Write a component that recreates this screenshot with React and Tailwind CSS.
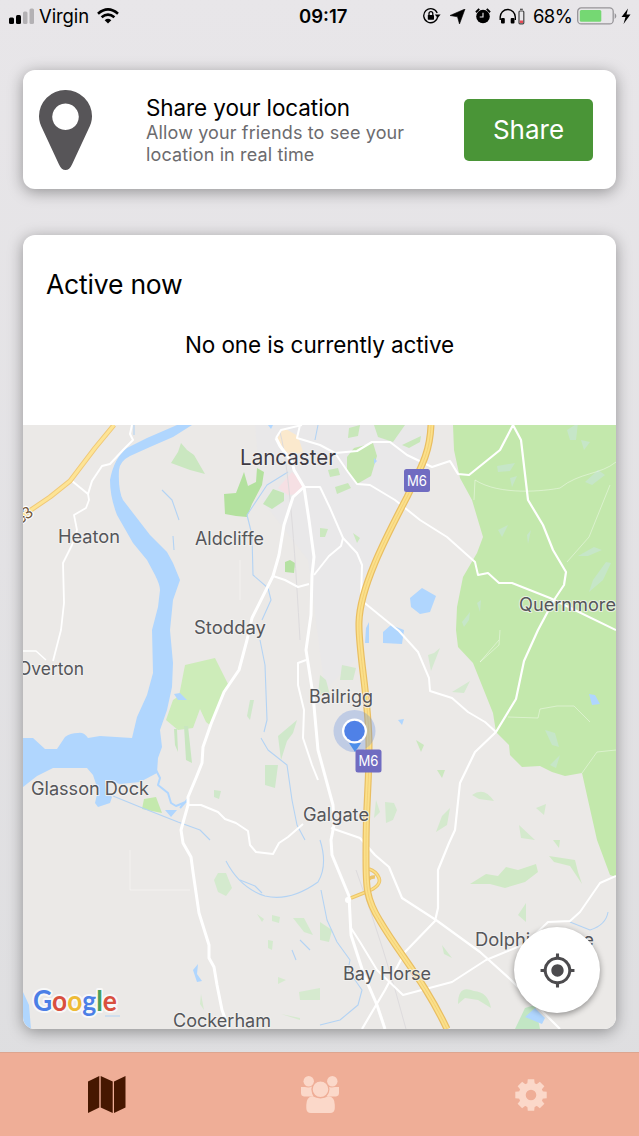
import React from "react";
import { MdGpsFixed } from "react-icons/md";

const WATER = "#b0d6fe";
const WOOD = "#c3e8ac";

// Roads drawn as plain white lines, [path, width]
const roads = [
  ["M132 425 L130 434 L133 440 L124 449 L110 464 L102 466 L92 481 L88 494 L72 481", 2],
  ["M88 494 L89 500 L86 508 L74 515 L77 530 L72 545 L63 563 L64 603 L61 630 L53 661", 1.8],
  ["M23 651 H36 L46 660", 1.5],
  ["M276 438 L281 430 L302 425 M300 425 L297 438 L320 445 L335 453", 2],
  ["M276 438 L280 446 L292 462 L294 470 L304 487 L293 497 L284 525 L279 555 L273 576 L252 618 L247 640 L239 670 L224 692 L211 724 L203 747 L202 763 L196 778 L188 797 L188 805 L181 830 L183 843 L191 857 L193 872 L199 913 L209 945 L209 958 L214 967 L217 985 L222 1010 L229 1029", 3],
  ["M304 487 L309 520 L314 557 L312 575 L311 615 L306 650 L313 695 L318 750 L333 805 L334 825 L331 840 L332 855 L349 896 L351 935 L364 975 L377 1005 L385 1029", 3],
  ["M304 487 H320 L330 508 L343 538 L341 546 L329 556 L314 575", 2],
  ["M343 538 L357 553 L362 565 L361 600 L399 631 L418 652 L429 678 L430 691 L452 698 L468 712 L485 722 L496 732", 2],
  ["M335 453 L357 451 L372 442 L390 442 L407 455 L432 467 L450 461 L458 474 L469 475 L500 450 L513 425 L521 440 L528 500 L543 525 L553 550 L566 572 L564 585 L554 600 L538 630 L524 661 L516 699 L496 732 L475 752 L460 783 L455 830 L449 843 L438 870 L438 908 L435 921 L405 952 L385 990 L362 1029", 2.2],
  ["M335 453 L348 472 L357 484 L370 485 L395 500 L420 520 L447 537 L475 562 L478 575 L488 573 L499 583 L512 583 L550 598 L616 630", 2],
  ["M273 576 L285 580 L298 587 L309 584", 2],
  ["M306 660 L298 663 L298 685 L304 710 L303 738 L312 765 L318 780", 2],
  ["M188 805 L201 805 L218 812 L225 819 L236 823 L248 831 L250 845 L256 852 L273 854 L279 843 L288 837 L303 824", 2],
  ["M331 828 L360 838 L375 855 L389 867 L402 898 L436 920 L480 952 L511 980 L560 1029", 2.2],
  ["M351 928 L360 942 L377 970 L403 995 L452 982 L486 960 L525 944 L548 922 L570 921 L580 912 L600 883 L616 876", 2],
];

const faintRoads = [
  "M475 480 L474 500 M475 480 C500 496 545 491 560 488 C580 472 600 475 616 462",
  "M610 485 L589 537 L567 562 M499 640 L480 662 L499 645 L500 630",
  "M508 717 L538 718 L540 709 L557 706 L574 706 L590 722 M582 773 L597 752 L616 750",
  "M130 850 V890 H190 M240 560 V600",
];

const streams = [
  "M288 472 L267 485 L247 515 L252 535 L253 575 L268 588 L271 600 L262 620 M260 640 L265 665 L267 720 L264 732",
  "M162 490 L172 500 L179 520 M173 536 L174 550 M134 425 V435 M318 425 L315 440",
  "M261 738 L268 750 L287 765 L292 800 L297 825 L305 840",
  "M113 796 L140 807 L178 822 L200 830 L210 840 M226 861 Q240 888 265 896 Q290 902 318 882 Q328 865 320 840",
  "M321 890 L327 920 L337 942 L350 960 L348 970 L362 990 L358 1005 L340 1020 L320 1025",
  "M240 880 L255 886 L262 893 M300 940 L310 950 M292 950 L296 960 M105 1016 H120",
  "M570 922 L590 930 Q606 925 608 912",
];

const parks = [
  ["M224 494 L236 493 L241 480 L244 472 L248 486 L256 482 L257 468 L264 472 L262 485 L252 504 L247 517 L236 516 L225 514z", "#b3e19e"],
  ["M171 463 L178 452 L181 443 L187 450 L194 455 L205 474 L190 470z", "#cae7c0"],
  ["M263 504 L273 489 L284 493 V501 L272 509z", "#c4e6b8"],
  ["M185 665 L215 658 L228 684 L211 726 L206 722 L200 709 L193 728 L178 730 L166 720 L173 700 L179 696z", "#cdecb9"],
  ["M174 729 L175 745 L178 752 L177 729z M184 726 L186 760 L192 763 L188 726z", "#c8e6c0"],
  ["M144 799 L156 797 L162 813 L142 809z", "#c4e9ad"],
  ["M285 562 L290 560 L295 563 L294 573 L285 572z", "#b5e1a2"],
  ["M347 457 L354 448 L373 443 L377 456 L371 476 L357 484 L347 470z", "#c5e6b1"],
  ["M349 428 L360 425 L358 436 L348 438z M374 425 L405 425 L393 442 L378 437z M402 445 L421 436 L420 442 L409 448z M335 487 L348 483 L351 488 L337 494z M328 470 L338 468 L340 475 L330 477z", "#c8e7ba"],
  ["M278 736 L297 720 L293 733 L287 741 L281 760z M265 765 L278 765 L275 788 L265 785z M250 700 L254 700 L250 720 L247 716z M214 790 L221 791 L219 799 L214 797z", "#cfe8ca"],
  ["M214 880 L218 873 L226 873 L232 888 L226 896 L218 892z M272 915 L280 917 L279 923 L272 921z M293 918 L304 918 L313 935 L304 932z M257 914 L264 919 L262 922z M268 940 L273 941 L272 950 L268 948z", "#d4eace"],
  ["M299 992 L320 988 V1000 H300z M278 977 L286 980 L278 984z M281 1014 L300 1018 V1020z M201 994 L204 1010 L200 1004z", "#d6eacf"],
  ["M320 675 L326 680 L330 695 H318z M342 665 L356 668 L353 680 L340 680z", "#d3e8cd"],
  ["M431 671 L440 648 L434 653 L428 655z M452 692 L470 681 L464 693z M385 802 L394 803 L397 810 L393 820 L386 823z M376 800 L380 812 L374 818z", "#d5e9d0"],
  ["M472 795 Q484 786 494 801 L479 799z M536 808 L546 804 L544 815z M519 825 L535 840 L521 838z M442 816 L450 808 L447 825 L436 832z", "#d4e9cd"],
  ["M470 884 L486 874 L498 876 L506 867 L518 870 L536 864 L538 872 L525 882 L505 888 L490 884z M549 856 L575 860 L578 872 L582 884 L570 866 L554 862z M553 840 L560 840 L559 848z", "#d0e9c6"],
  ["M458 1004 Q458 984 474 991 Q488 992 491 1008 L478 1000 L465 998z M518 915 L526 903 L526 922z M442 945 L452 958 L444 954z M320 922 L332 930 L329 942 L320 940z", "#d2e9cc"],
  ["M515 1029 L525 1008 L535 1005 L540 1029z", "#c2e6c4"],
  ["M416 740 L424 745 L421 752z M437 770 L445 770 L442 778z M353 533 L360 538 L357 543z M320 528 L328 529 L325 537 H320z", "#cbe8bf"],
];

// Bare patches inside the big forest
const clearings =
  "M567 430 L578 423 L576 440 L570 440z M581 440 L590 442 L584 450z M497 466 L515 463 L510 471 L498 472z M510 478 L517 476 L512 487z M585 482 L598 470 L605 475 L592 485z M498 530 L508 525 L502 537z M527 535 L531 530 L528 544z M578 556 L594 547 L602 550 L588 556z M593 580 L606 562 L611 563 L603 580 L589 592z M545 730 L555 733 L559 747 L552 745z M550 765 L560 755 L556 768z M462 622 L470 612 L469 620 L464 627z M477 603 L481 600 L480 612z";

const labels = [
  { text: "Lancaster", x: 240, y: 465, width: 96, size: 22, fill: "#3f3b44" },
  { text: "Heaton", x: 58, y: 543, width: 62 },
  { text: "Aldcliffe", x: 195, y: 545, width: 69 },
  { text: "Stodday", x: 194, y: 634, width: 72 },
  { text: "Quernmore", x: 519, y: 611, width: 97 },
  { text: "Overton", x: 18, y: 675, width: 66 },
  { text: "Bailrigg", x: 309, y: 703, width: 64 },
  { text: "Glasson Dock", x: 31, y: 795, width: 118 },
  { text: "Galgate", x: 303, y: 821, width: 66 },
  { text: "Dolphinholme", x: 475, y: 946, width: 119 },
  { text: "Bay Horse", x: 343, y: 980, width: 88 },
  { text: "Cockerham", x: 173, y: 1027, width: 98 },
];

const googleLetters = [
  ["G", "#4c7fe6"],
  ["o", "#d9503f"],
  ["o", "#eebb35"],
  ["g", "#4c7fe6"],
  ["l", "#46a05a"],
  ["e", "#d9503f"],
];

const M6_PATH =
  "M431 425 C430 450 424 462 407 497 C390 530 360 585 359 622 C358 650 369 700 369 745 C369 790 366 800 366 850 C366 885 365 897 380 921 C400 955 425 982 447 1029";

const MotorwayBadge = ({ x, y }) => (
  <g>
    <rect x={x} y={y} width="26" height="23" rx="2.5" fill="#706cc1" />
    <text x={x + 13} y={y + 16.5} textAnchor="middle" fontSize="14" textLength="20" lengthAdjust="spacingAndGlyphs" fill="#fff">
      M6
    </text>
  </g>
);

const Map = () => (
  <svg viewBox="23 425 593 604" className="block h-[604px] w-full font-[Inter,sans-serif]" fill="none" strokeLinejoin="round">
    <rect x="23" y="425" width="593" height="604" fill="#ebe9e7" />
    <path d="M255 425 H430 L415 475 L370 570 L355 660 L325 690 L308 560 L262 500z" fill="#e9e8e9" />

    {/* woods and parks */}
    <path
      d="M453 425 L454 450 L460 478 L472 500 L483 537 L477 553 L463 577 L457 607 L456 630 L458 647 L473 663 L485 693 L493 713 L496 732 L509 745 L510 755 L522 767 L540 766 L552 772 L565 776 L582 773 L588 800 L597 840 L610 875 L616 877 V425z"
      fill={WOOD}
    />
    <path d={clearings} fill="#c6e6c8" />
    {parks.map(([d, fill]) => (
      <path key={d} d={d} fill={fill} />
    ))}
    <path d="M276 440 L284 428 L298 436 L303 452 L290 456z" fill="#fbe9cd" />
    <path d="M278 488 L292 472 L303 483 L299 494 L288 495z" fill="#f6e0e4" />

    {/* water */}
    <path
      d="M177 425 L147 438 L127 448 Q114 458 110 480 Q110 497 117 515 L133 543 L147 560 L155 575 Q160 585 160 590 L158 607 L152 630 L153 673 L147 695 L137 717 L132 738 L100 736 L88 738 Q84 732 78 733 Q70 733 65 737 L57 749 L45 749 L33 738 H23 V787 L37 776 L53 768 L87 768 L93 775 L98 790 L95 803 L98 807 L110 803 L112 797 L106 790 L105 780 L120 784 L140 782 L157 773 L158 758 L162 747 L160 730 L167 710 L172 687 L173 663 L170 630 L173 600 L180 580 L173 563 L167 552 L150 535 L133 513 L123 500 Q118 490 119 470 Q120 461 130 456 L150 447 L173 437 L192 425z"
      fill={WATER}
    />
    <path d="M156 770 L160 778 L158 785 L168 793 L171 803 L176 806 L188 801 M180 808 L188 799" stroke={WATER} strokeWidth="2" />
    <path
      d="M410 598 L422 588 L436 596 L430 612 L420 614 L411 607z M383 632 L391 625 L404 630 L402 644 L383 643z M366 628 L369 622 L369 643 H365z M174 694 L180 693 L187 700 L178 700z M165 810 L177 810 L171 817z M23 992 L29 1005 L31 1029 H23z M193 970 L198 964 L197 974 L202 981 L197 982z M525 1017 L535 1008 L545 1018 L542 1024z M589 694 L595 695 L600 704 L592 705z M398 720 L404 719 L402 725z M374 458 L377 461 L374 464z M268 425 H273 L271 429z"
      fill={WATER}
    />
    {streams.map((d) => (
      <path key={d} d={d} stroke="#b3d3f4" strokeWidth="1.1" />
    ))}

    {/* roads */}
    <path d="M280 432 C290 470 296 570 300 640 M356 870 Q385 950 406 1029" stroke="#dddbdd" strokeWidth="1" />
    {faintRoads.map((d) => (
      <path key={d} d={d} stroke="#fff" strokeWidth="1" opacity=".4" />
    ))}
    {roads.map(([d, width]) => (
      <path key={d} d={d} stroke="#fff" strokeWidth={width} />
    ))}
    <path d="M114 425 L95 448 L70 481 L50 497 L22 516" stroke="#f0c877" strokeWidth="5" />
    <path d="M114 425 L95 448 L70 481 L50 497 L22 516" stroke="#fde495" strokeWidth="3" />
    <path d="M351 898 L366 892 Q382 886 379 878 Q376 871 369 869 M366 890 Q366 876 375 877" stroke="#ecc469" strokeWidth="3.6" />
    <path d="M351 898 L366 892 Q382 886 379 878 Q376 871 369 869" stroke="#fbdf86" strokeWidth="1.8" />
    <path d={M6_PATH} stroke="#e9be62" strokeWidth="7" />
    <path d={M6_PATH} stroke="#fbe08a" strokeWidth="4.6" />
    <path d={M6_PATH} stroke="#f1cd73" strokeWidth="0.8" />
    <circle cx="348" cy="900" r="3" fill="#fff" />

    {labels.map(({ text, x, y, width, size = 18, fill = "#55565a" }) => (
      <text
        key={text}
        x={x}
        y={y}
        textLength={width}
        lengthAdjust="spacingAndGlyphs"
        fontSize={size}
        fill={fill}
        stroke="#f3f2f1"
        strokeWidth="2"
        strokeOpacity=".8"
        paintOrder="stroke"
      >
        {text}
      </text>
    ))}
    <text transform="translate(20 525) rotate(-36)" fontSize="16" textLength="18" fill="#755a3c" stroke="#fff" strokeWidth="2" paintOrder="stroke">
      33
    </text>

    {/* own position */}
    <circle cx="354.500" cy="731" r="21" fill="#5480e0" opacity=".28" />
    <path d="M349 743 L355 752 L361 743z" fill="#4d8fea" />
    <circle cx="354.500" cy="731" r="12.500" fill="#fff" />
    <circle cx="354.500" cy="731" r="10.300" fill="#4f81e7" />
    <MotorwayBadge x={404} y={469} />
    <MotorwayBadge x={355.500} y={749.500} />

    <text
      className="font-[Lato,sans-serif]"
      x="33"
      y="1011"
      fontSize="29"
      fontWeight="700"
      textLength="84"
      lengthAdjust="spacingAndGlyphs"
      stroke="#f8f8f8"
      strokeWidth="4"
      paintOrder="stroke"
    >
      {googleLetters.map(([letter, fill], i) => (
        <tspan key={i} fill={fill}>
          {letter}
        </tspan>
      ))}
    </text>
  </svg>
);

const StatusBar = () => (
  <header className="grid h-8 grid-cols-[1fr_auto_1fr] items-center pr-2 pl-[9px] text-[18.500px] leading-8 text-black">
    <div className="flex items-center">
      <svg width="26" height="16" viewBox="0 0 26 16">
        <rect x="0" y="9.500" width="5" height="6.500" rx="1.500" />
        <rect x="7" y="7" width="5" height="9" rx="1.500" />
        <rect x="14" y="3.500" width="4.500" height="12.500" rx="1.500" fill="#b3b1b4" />
        <rect x="20.500" y="0.500" width="4.500" height="15.500" rx="1.500" fill="#b3b1b4" />
      </svg>
      <span className="ml-1 w-[50px] tracking-[-0.1px]">Virgin</span>
      <svg className="ml-2" width="22" height="16" viewBox="0 0 22 16" fill="none" stroke="#000" strokeWidth="2.700">
        <path d="M1 5.700 Q11 -2.800 21 5.700" />
        <path d="M4.600 9.300 Q11 4 17.400 9.300" />
        <path d="M11 15.500 L7.700 12.200 Q11 9.400 14.300 12.200z" fill="#000" stroke="none" />
      </svg>
    </div>
    <div className="w-[50px] pl-1 text-center font-semibold whitespace-nowrap">09:17</div>
    <div className="flex items-center justify-end">
      <svg width="18" height="16" viewBox="0 0 18 16" fill="none" stroke="#000" strokeWidth="1.300">
        <path d="M14.700 8.500 A7 7 0 1 1 14.200 5 M13 12 A7 7 0 0 1 10 14.500" />
        <path d="M11.800 6.500 h5.800 l-2.900 3.400z" fill="#000" stroke="none" />
        <rect x="4.800" y="7" width="6.200" height="4.700" rx=".6" fill="#000" stroke="none" />
        <path d="M6 7 V5.500 a1.900 1.900 0 0 1 3.800 0 V7" />
      </svg>
      <svg className="ml-[9px]" width="16" height="15" viewBox="0 0 16 15">
        <path d="M15 0 L9.500 15 L7.500 7.800 L0 6.500z" stroke="#000" strokeWidth=".6" />
      </svg>
      <svg className="ml-[9px]" width="16" height="16" viewBox="0 0 17 17">
        <circle cx="8.500" cy="9" r="7.200" />
        <path d="M1 4.500 L4.500 1 M16 4.500 L12.500 1" stroke="#000" strokeWidth="2" />
        <path d="M8.500 5 V9.500 H5" stroke="#e8e6e9" strokeWidth="1.200" fill="none" />
      </svg>
      <svg className="ml-2" width="26" height="17" viewBox="0 0 26 17" fill="none">
        <path d="M1.200 12 V9 A7.300 7.300 0 0 1 16.300 9 V12" stroke="#000" strokeWidth="1.400" />
        <rect x="2" y="10" width="3.800" height="5.500" rx="1" fill="#000" />
        <rect x="11.700" y="10" width="3.800" height="5.500" rx="1" fill="#000" />
        <rect x="20" y="3" width="4.800" height="12.800" rx="1" stroke="#444" strokeWidth="1.200" />
        <path d="M21 1.300 H23.800" stroke="#444" strokeWidth="1.200" />
        <rect x="20.800" y="12.500" width="3.200" height="2.500" fill="#e74a56" />
      </svg>
      <span className="ml-2 w-[39px] tracking-[-0.6px]">68%</span>
      <svg className="ml-[5px]" width="54" height="18" viewBox="0 0 54 18">
        <rect x=".7" y=".9" width="35.500" height="16" rx="3.500" fill="none" stroke="#969498" strokeWidth="1.300" />
        <rect x="2.800" y="3" width="21.500" height="11.800" rx="1.500" fill="#75d873" />
        <path d="M37.700 6 Q41 9 37.700 12z" fill="#969498" />
        <path d="M51 1.500 L44.500 10 H48.500 L46.500 17 L53.500 7.500 H49.500z" />
      </svg>
    </div>
  </header>
);

const ShareCard = () => (
  <section className="flex h-[119px] items-center rounded-xl bg-white pr-[23px] pl-4 shadow-[0_3px_15px_rgba(0,0,0,0.36)]">
    <svg width="53" height="80" viewBox="0 0 53 80" fill="#575558">
      <path
        fillRule="evenodd"
        d="M26.500 0 A26.300 26.300 0 0 1 53 26.500 C53 31 51.500 35 49.500 39 L33 74.500 Q30.500 80 26.500 80 Q22.500 80 20 74.500 L3.500 39 C1.500 35 0 31 0 26.500 A26.300 26.300 0 0 1 26.500 0z M26.500 13.500 a13.300 13.300 0 1 0 0.010 0z"
      />
    </svg>
    <div className="ml-[54px] flex-1">
      <h2 className="text-[22.500px] leading-7 tracking-[-0.1px] whitespace-nowrap text-black">Share your location</h2>
      <p className="text-[18px] leading-[22px] tracking-[0.130px] whitespace-nowrap text-[#6c6b6e]">
        Allow your friends to see your
        <br />
        location in real time
      </p>
    </div>
    <button className="h-[62px] w-[129px] rounded-[5px] bg-[#4a9537] text-[26px] text-white">Share</button>
  </section>
);

const TabBar = () => (
  <nav className="grid h-[84px] grid-cols-3 place-items-center border-t border-[#dda58f] bg-[#efae97]">
    <svg width="38" height="37" viewBox="0 0 38 37" fill="#461700">
      <path d="M0 5.500 L11.300 0 V31.500 L0 37z M12.700 0 L24.700 5.500 V37 L12.700 31.500z M26 5.500 L37.500 0 V31.500 L26 37z" />
    </svg>
    <svg width="38" height="37" viewBox="0 0 38 37" fill="#fbd8c9">
      <circle cx="7.700" cy="5.200" r="5.200" />
      <circle cx="31.300" cy="5.200" r="5.200" />
      <path d="M0 11 H4 Q8 12 11 10.500 Q9.800 16 12.500 20.500 H3 Q0 20 0 17z M38 11 H34 Q30 12 27 10.500 Q28.200 16 25.500 20.500 H35 Q38 20 38 17z" />
      <circle cx="19.500" cy="13.300" r="8.400" stroke="#efae97" strokeWidth="1.200" />
      <path d="M11.500 20.300 Q19.500 24.500 27.500 20.300 Q33.800 21 33.800 29 V32 Q33.800 37 29 37 H10 Q5.300 37 5.300 32 V29 Q5.300 21 11.500 20.300z" />
    </svg>
    <svg className="mr-[3px]" width="32" height="32" viewBox="0 0 32 32" fill="#fbd8c9">
      <circle cx="16" cy="16" r="8.800" fill="none" stroke="#fbd8c9" strokeWidth="7" />
      {[0, 45, 90, 135, 180, 225, 270, 315].map((angle) => (
        <path key={angle} d="M12.800 0.300 H19.200 L19.800 5.500 H12.200z" transform={`rotate(${angle} 16 16)`} />
      ))}
    </svg>
  </nav>
);

const App = () => (
  <div className="flex h-[1136px] w-[639px] flex-col overflow-hidden bg-linear-to-b from-[#e8e6e9] to-[#dedee0] font-[Inter,sans-serif]">
    <StatusBar />
    <main className="flex flex-1 flex-col gap-[46px] pt-[38px] pr-[23px] pl-[23px]">
      <ShareCard />
      <section className="relative h-[794px] overflow-hidden rounded-xl bg-white shadow-[0_3px_15px_rgba(0,0,0,0.36)]">
        <div className="h-[190px] px-6 pt-8">
          <h1 className="-ml-px text-[26.500px] leading-[34px] tracking-[-0.2px] text-black">Active now</h1>
          <p className="mt-7 text-center text-[22.500px] leading-8 tracking-[-0.1px] text-black">No one is currently active</p>
        </div>
        <Map />
        <button className="absolute right-4 bottom-4 flex size-[86px] items-center justify-center rounded-full bg-white text-[#4c4b4e] shadow-[0_2px_6px_rgba(0,0,0,0.4)]">
          <MdGpsFixed size={37} />
        </button>
      </section>
    </main>
    <TabBar />
  </div>
);

export default App;
